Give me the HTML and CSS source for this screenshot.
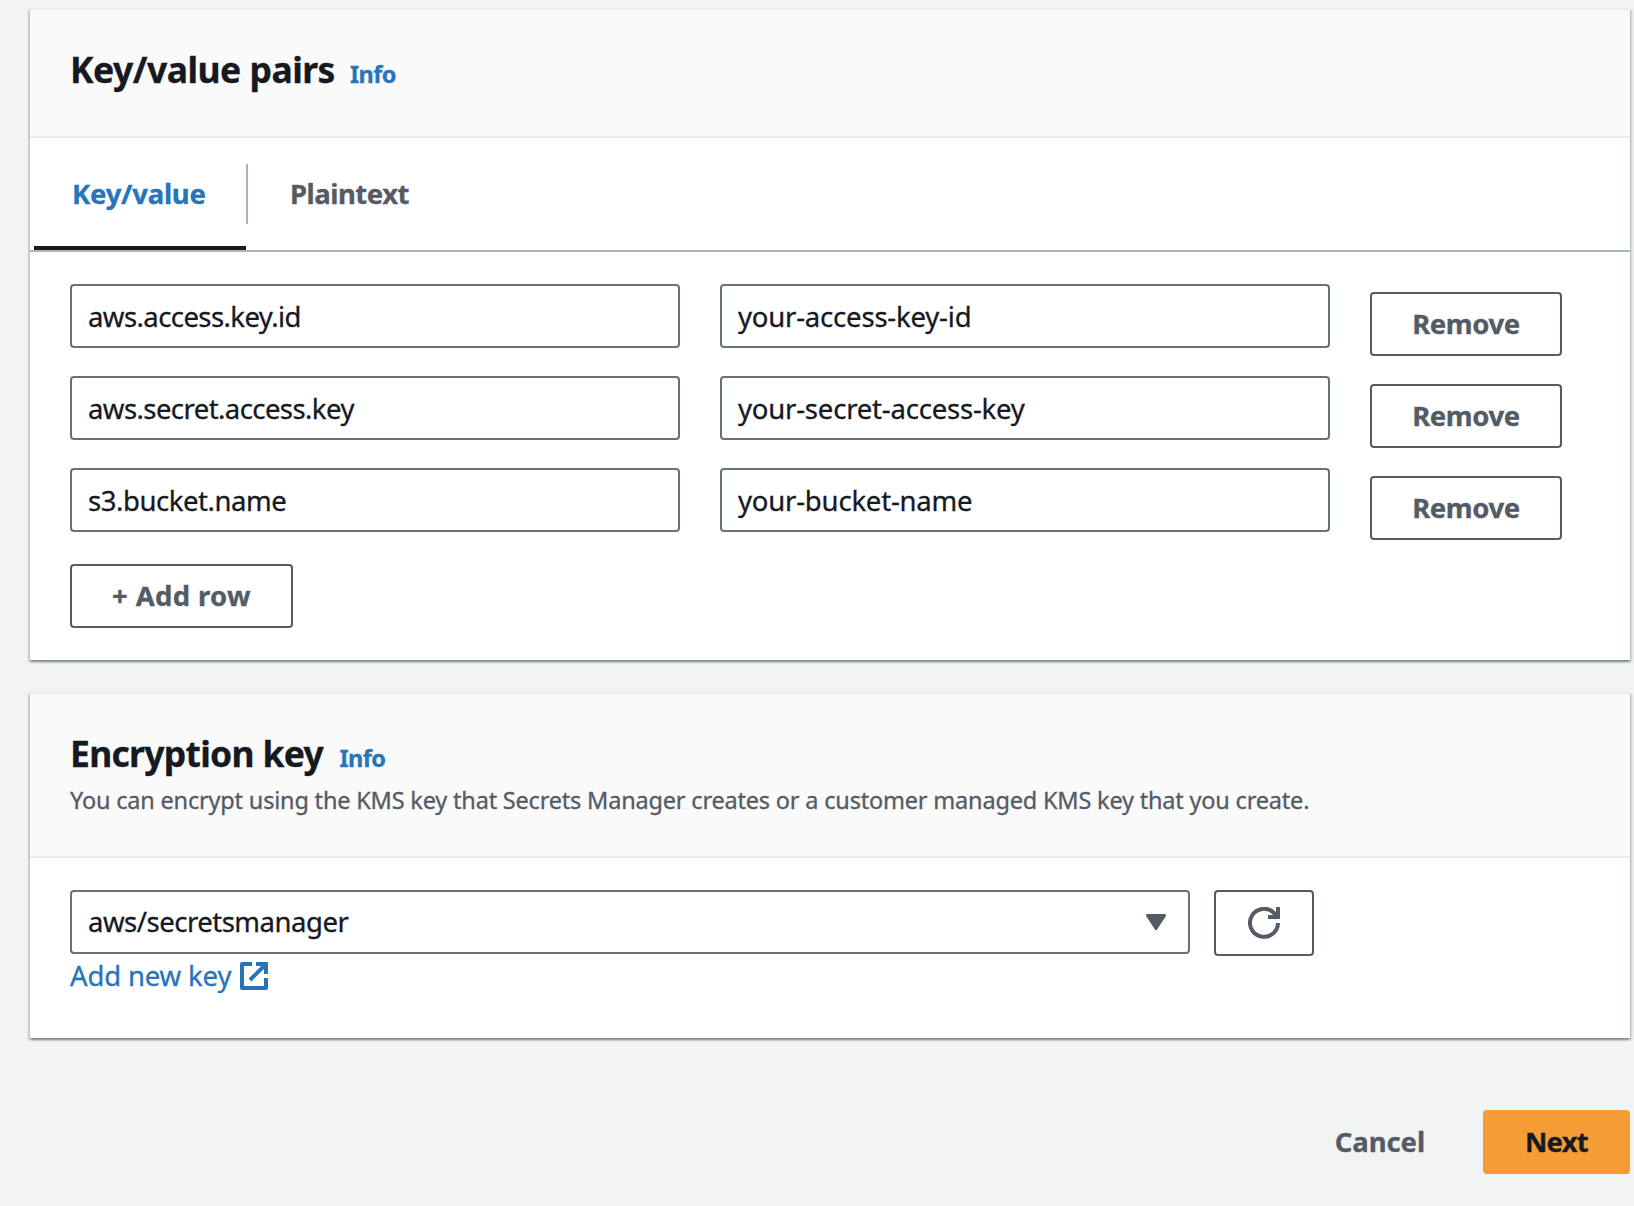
FILE: index.html
```html
<!DOCTYPE html>
<html lang="en">
<head>
<meta charset="utf-8">
<title>Store a new secret</title>
<link rel="stylesheet" href="styles.css">
</head>
<body>
<main class="page">
  <section class="card">
    <header class="card-header">
      <div class="title-row"><h2 class="title title-pairs">Key/value pairs</h2><a class="info">Info</a></div>
    </header>
    <nav class="tabs">
      <a class="tab tab-active">Key/value</a>
      <a class="tab tab-plain">Plaintext</a>
    </nav>
    <div class="pairs">
      <div class="pair-row">
        <div class="field field-key">aws.access.key.id</div>
        <div class="field field-value">your-access-key-id</div>
        <button class="button remove">Remove</button>
      </div>
      <div class="pair-row">
        <div class="field field-key">aws.secret.access.key</div>
        <div class="field field-value">your-secret-access-key</div>
        <button class="button remove">Remove</button>
      </div>
      <div class="pair-row">
        <div class="field field-key field-bucket">s3.bucket.name</div>
        <div class="field field-value">your-bucket-name</div>
        <button class="button remove">Remove</button>
      </div>
      <button class="button add-row">+ Add row</button>
    </div>
  </section>

  <section class="card">
    <header class="card-header card-header-tall">
      <div class="title-row"><h2 class="title title-key">Encryption key</h2><a class="info">Info</a></div>
      <p class="description">You can encrypt using the KMS key that Secrets Manager creates or a customer managed KMS key that you create.</p>
    </header>
    <div class="key-body">
      <div class="select-row">
        <div class="field select">
          <span>aws/secretsmanager</span>
          <svg class="caret" viewBox="0 0 20 16" width="20" height="16"><path d="M1.500 1.500h17l-8.500 13z" fill="#545b64" stroke="#545b64" stroke-width="3" stroke-linejoin="round"/></svg>
        </div>
        <button class="button refresh" aria-label="Refresh">
          <svg viewBox="0 0 32 32" width="32" height="32" fill="none" stroke="#545b64" stroke-width="4"><path d="M30 16a14 14 0 1 1-4-10l4 5"/><path d="M20 10h10V0"/></svg>
        </button>
      </div>
      <a class="new-key">Add new key
        <svg viewBox="0 0 28 28" width="28" height="28" fill="none" stroke="#2774bb" stroke-width="4"><path d="M12 2H2v24h24V16" stroke-linejoin="round"/><path d="M16 2h10v10M26 2 10 18"/></svg>
      </a>
    </div>
  </section>

  <footer class="actions">
    <a class="cancel">Cancel</a>
    <button class="button next">Next</button>
  </footer>
</main>
</body>
</html>
```
FILE: styles.css
```css
* { box-sizing: border-box; }

body {
  margin: 0;
  height: 1206px;
  overflow: hidden;
  background: #f2f4f4;
  color: #16191f;
  font: 400 27.5px/40px "Noto Sans", "Open Sans", sans-serif;
  white-space: nowrap;
  -webkit-text-stroke: .3px;
}

.page {
  display: flex;
  flex-direction: column;
  gap: 32px;
  padding: 8px 4px 0 30px;
}

.card {
  background: #fff;
  border-top: 2px solid #eaeded;
  box-shadow: 0 2px 2px rgba(0, 28, 36, .3), 2px 2px 2px rgba(0, 28, 36, .15), -2px 2px 2px rgba(0, 28, 36, .15);
}

.card-header {
  height: 128px;
  padding: 37px 40px 0;
  background: #fafafa;
  border-bottom: 2px solid #eaeded;
}
.card-header-tall { height: 164px; }

.title-row { display: flex; align-items: baseline; height: 44px; }
.title { margin: 0; font-size: 35.5px; line-height: 44px; font-weight: 700; }
.title-pairs { width: 280px; letter-spacing: -.52px; }
.title-key { width: 269.5px; letter-spacing: -.72px; }
.info { color: #2774bb; font-size: 23.5px; line-height: 30px; font-weight: 700; letter-spacing: -.6px; }
.description { margin: 7px 0 0; color: #545b64; font-size: 23.5px; line-height: 36px; letter-spacing: -.19px; }

.tabs {
  display: flex;
  height: 114px;
  padding-left: 4px;
  border-bottom: 2px solid #aab7b8;
}
.tab { padding-top: 36px; color: #545b64; font-weight: 700; letter-spacing: -.5px; }
.tab-active {
  width: 212px;
  padding-left: 38px;
  color: #2774bb;
  border-bottom: 4px solid #16191f;
  letter-spacing: -.25px;
}
.tab-plain { height: 60px; margin-top: 26px; padding: 10px 0 0 42px; border-left: 2px solid #aab7b8; }

.pairs { height: 408px; padding: 32px 40px 0; }
.pair-row { display: flex; gap: 40px; height: 92px; }

.field {
  width: 610px;
  height: 64px;
  padding: 11px 16px 9px;
  background: #fff;
  border: 2px solid #687078;
  border-radius: 4px;
}
.field-key { letter-spacing: -.57px; }
.field-bucket { letter-spacing: -.44px; }
.field-value { letter-spacing: -.2px; }

.button {
  height: 64px;
  padding: 0;
  background: #fff;
  border: 2px solid #545b64;
  border-radius: 4px;
  color: #545b64;
  font: inherit;
  font-weight: 700;
  text-align: center;
}
.remove { width: 192px; margin-top: 8px; letter-spacing: -.4px; }
.add-row { width: 223px; margin-top: 4px; letter-spacing: .35px; }

.key-body { height: 180px; padding: 32px 40px 0; }
.select-row { display: flex; gap: 24px; }
.select {
  display: flex;
  justify-content: space-between;
  align-items: center;
  width: 1120px;
  padding: 10px 22px 10px 16px;
  letter-spacing: -.49px;
}
.refresh { display: flex; align-items: center; justify-content: center; width: 100px; height: 66px; }
.new-key {
  display: flex;
  align-items: center;
  gap: 9px;
  height: 40px;
  color: #2774bb;
  letter-spacing: -.15px;
}

.actions {
  display: flex;
  justify-content: flex-end;
  align-items: center;
  gap: 58px;
  margin-top: 40px;
}
.cancel { color: #545b64; font-weight: 700; letter-spacing: -.1px; }
.next { width: 147px; background: #f49d37; border-color: #f49d37; color: #16191f; letter-spacing: -.8px; }
```
